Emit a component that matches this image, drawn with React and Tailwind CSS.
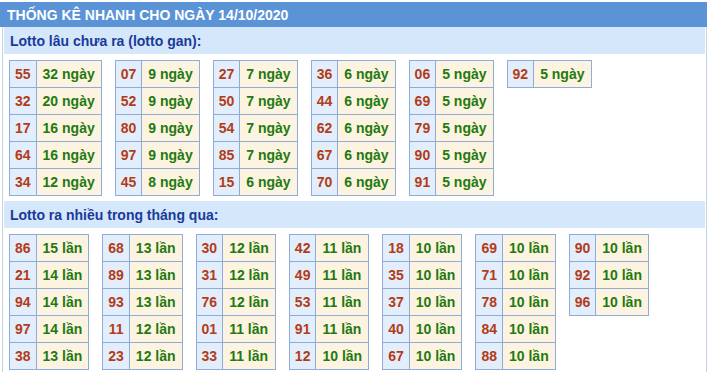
const LOTTO_GAN = [
  [["55", 32], ["32", 20], ["17", 16], ["64", 16], ["34", 12]],
  [["07", 9], ["52", 9], ["80", 9], ["97", 9], ["45", 8]],
  [["27", 7], ["50", 7], ["54", 7], ["85", 7], ["15", 6]],
  [["36", 6], ["44", 6], ["62", 6], ["67", 6], ["70", 6]],
  [["06", 5], ["69", 5], ["79", 5], ["90", 5], ["91", 5]],
  [["92", 5]]
];

const LOTTO_NHIEU = [
  [["86", 15], ["21", 14], ["94", 14], ["97", 14], ["38", 13]],
  [["68", 13], ["89", 13], ["93", 13], ["11", 12], ["23", 12]],
  [["30", 12], ["31", 12], ["76", 12], ["01", 11], ["33", 11]],
  [["42", 11], ["49", 11], ["53", 11], ["91", 11], ["12", 10]],
  [["18", 10], ["35", 10], ["37", 10], ["40", 10], ["67", 10]],
  [["69", 10], ["71", 10], ["78", 10], ["84", 10], ["88", 10]],
  [["90", 10], ["92", 10], ["96", 10]]
];

function StatTable({ rows, unit }) {
  return (
    <table className="border-collapse border border-[#8eacd9]">
      <tbody>
        {rows.map(([num, count]) => (
          <tr key={num} className="h-[27px]">
            <td className="border border-[#8eacd9] bg-[#e3eefc] px-[5px] text-center text-[#b23c17]">
              {num}
            </td>
            <td className="border border-[#8eacd9] bg-[#fdf3e1] px-[6px] text-[#1f7a0f] whitespace-nowrap">
              {count} {unit}
            </td>
          </tr>
        ))}
      </tbody>
    </table>
  );
}

function Section({ title, columns, unit }) {
  return (
    <div>
      <div className="h-[27px] bg-[#d4e7fb] pl-[6px] flex items-center text-[14px] font-bold text-[#1a3a9a]">
        {title}
      </div>
      <div className="flex items-start gap-[13px] pl-[5px] pt-[6px] pb-[5px]">
        {columns.map((rows, i) => (
          <StatTable key={i} rows={rows} unit={unit} />
        ))}
      </div>
    </div>
  );
}

export default function App() {
  return (
    <div className="w-[712px] h-[372px] bg-white pt-[2px] overflow-hidden font-['Liberation_Sans',Arial,sans-serif] text-[14px] font-bold leading-[18px]">
      <div className="w-[707px]">
        {/* tiêu đề chính */}
        <div className="h-[25px] bg-[#5b94d6] pl-[7px] flex items-center text-white uppercase">
          Thống kê nhanh cho ngày 14/10/2020
        </div>
        <div className="border-x border-[#c3d2e4] ml-[2px] px-[1px]">
          <Section title="Lotto lâu chưa ra (lotto gan):" columns={LOTTO_GAN} unit="ngày" />
          <Section title="Lotto ra nhiều trong tháng qua:" columns={LOTTO_NHIEU} unit="lần" />
        </div>
      </div>
    </div>
  );
}
